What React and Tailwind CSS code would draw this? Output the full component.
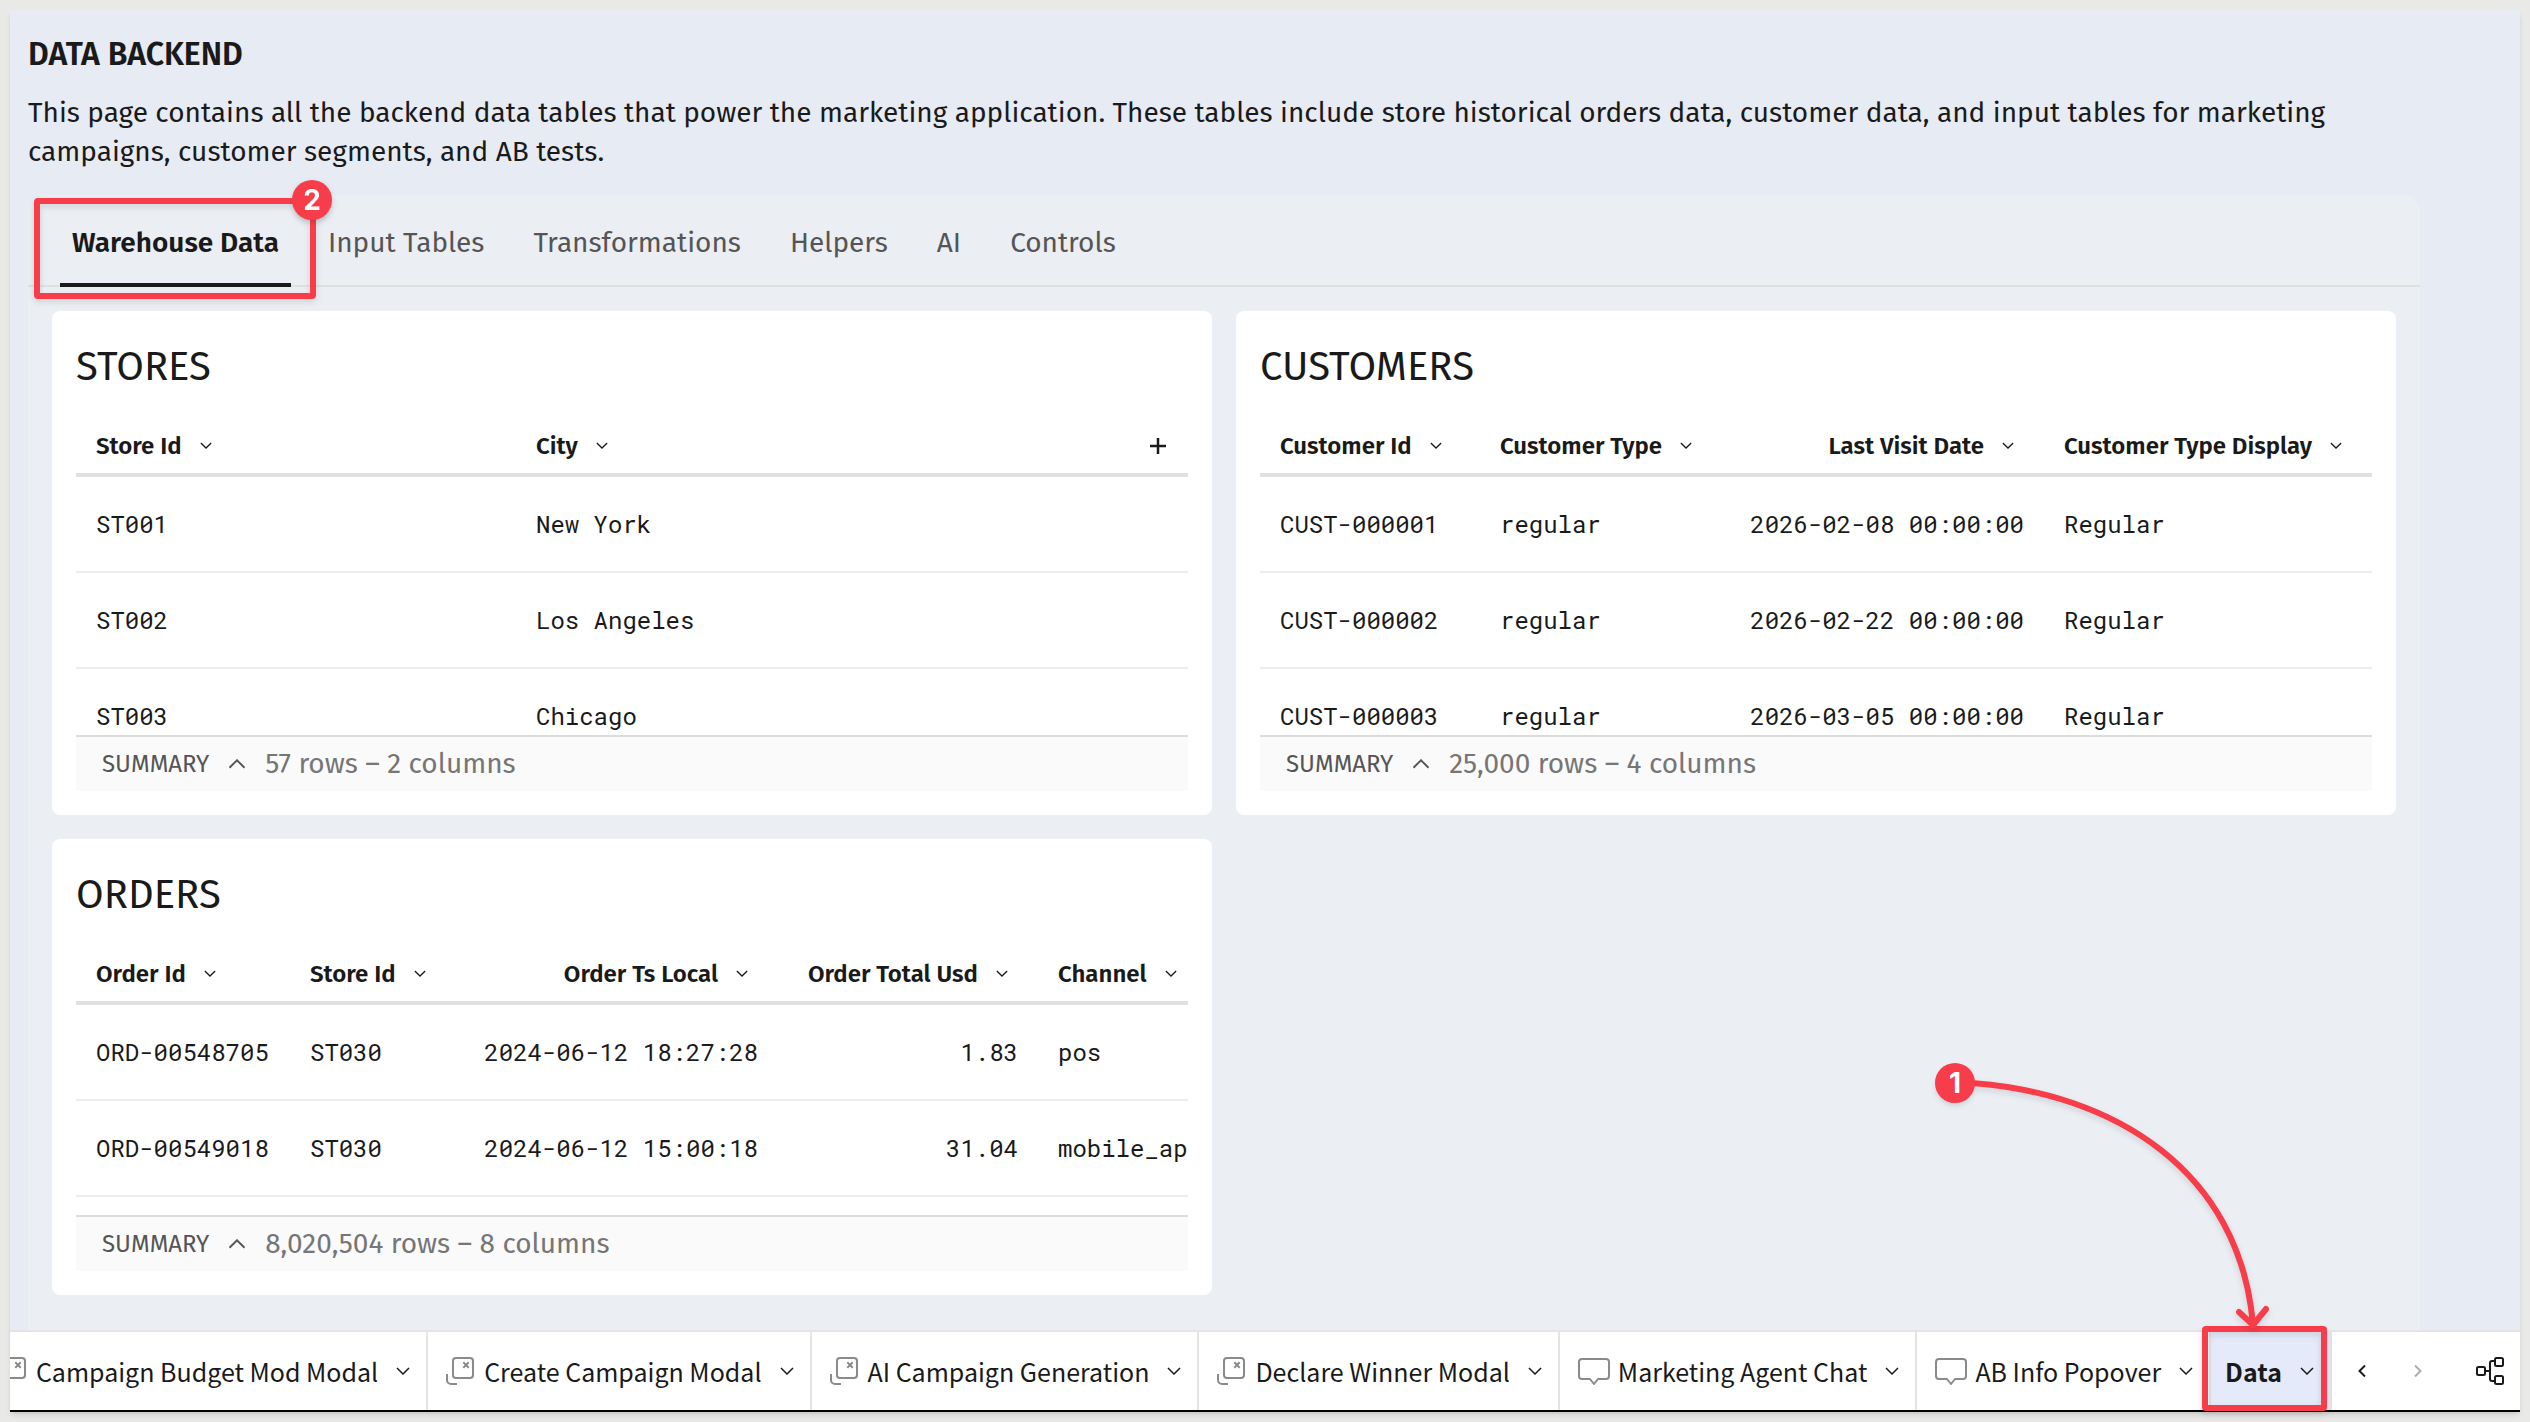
import React, { useState } from "react";

const sections = ["Warehouse Data", "Input Tables", "Transformations", "Helpers", "AI", "Controls"];

const pages = [
  { name: "Campaign Budget Mod Modal", type: "modal" },
  { name: "Create Campaign Modal", type: "modal" },
  { name: "AI Campaign Generation", type: "modal" },
  { name: "Declare Winner Modal", type: "modal" },
  { name: "Marketing Agent Chat", type: "popover" },
  { name: "AB Info Popover", type: "popover" },
  { name: "Data", type: "page" },
];

const stores = {
  title: "STORES",
  summary: "57 rows – 2 columns",
  height: "h-[317px]",
  canAdd: true,
  columns: [
    { name: "Store Id", width: "w-[440px]" },
    { name: "City", width: "" },
  ],
  rows: [
    ["ST001", "New York"],
    ["ST002", "Los Angeles"],
    ["ST003", "Chicago"],
  ],
};

const customers = {
  title: "CUSTOMERS",
  summary: "25,000 rows – 4 columns",
  height: "h-[317px]",
  columns: [
    { name: "Customer Id", width: "w-[220px]" },
    { name: "Customer Type", width: "w-[250px]" },
    { name: "Last Visit Date", width: "w-[314px]", right: true },
    { name: "Customer Type Display", width: "" },
  ],
  rows: [
    ["CUST-000001", "regular", "2026-02-08 00:00:00", "Regular"],
    ["CUST-000002", "regular", "2026-02-22 00:00:00", "Regular"],
    ["CUST-000003", "regular", "2026-03-05 00:00:00", "Regular"],
  ],
};

const orders = {
  title: "ORDERS",
  summary: "8,020,504 rows – 8 columns",
  height: "h-[269px]",
  columns: [
    { name: "Order Id", width: "w-[214px]" },
    { name: "Store Id", width: "w-[174px]" },
    { name: "Order Ts Local", width: "w-[314px]", right: true },
    { name: "Order Total Usd", width: "w-[260px]", right: true },
    { name: "Channel", width: "" },
  ],
  rows: [
    ["ORD-00548705", "ST030", "2024-06-12 18:27:28", "1.83", "pos"],
    ["ORD-00549018", "ST030", "2024-06-12 15:00:18", "31.04", "mobile_app"],
  ],
};

function ChevronDown({ className }) {
  return (
    <svg className={className} viewBox="0 0 14 8" fill="none" stroke="currentColor" strokeWidth="1.5" aria-hidden="true">
      <path d="M1 1l6 6 6-6" />
    </svg>
  );
}

function ModalIcon() {
  return (
    <svg className="h-7 w-7 shrink-0 text-[#8a8a8a]" viewBox="0 0 28 28" fill="none" stroke="currentColor" strokeWidth="2" aria-hidden="true">
      <rect x="7" y="1" width="20" height="20" rx="3" />
      <path d="M1 17v6a4 4 0 0 0 4 4h6" />
      <path d="M17.3 5.3l5.4 5.4M22.7 5.3l-5.4 5.4" />
    </svg>
  );
}

function PopoverIcon() {
  return (
    <svg className="h-7 w-8 shrink-0 text-[#8a8a8a]" viewBox="0 0 32 28" fill="none" stroke="currentColor" strokeWidth="2" strokeLinejoin="round" aria-hidden="true">
      <path d="M4 2h24a3 3 0 0 1 3 3v14a3 3 0 0 1-3 3h-8l-4 5-4-5H4a3 3 0 0 1-3-3V5a3 3 0 0 1 3-3z" />
    </svg>
  );
}

function StepBadge({ children, className }) {
  return (
    <span className={`absolute flex h-10 w-10 items-center justify-center rounded-full bg-[#f83d4a] font-[Inter,sans-serif] text-[28px] font-bold leading-none text-white shadow-md ${className}`}>
      {children}
    </span>
  );
}

function DataCard({ table }) {
  return (
    <section className="min-w-0 rounded-lg bg-white px-6 pb-6 pt-7">
      <h2 className="mb-[23px] text-[40px] leading-[56px]">{table.title}</h2>
      <div className={`overflow-hidden ${table.height}`}>
        <table className="w-full table-fixed border-separate border-spacing-0 text-2xl">
          <thead>
            <tr>
              {table.columns.map((col) => (
                <th key={col.name} className={`h-[59px] border-b-4 border-[#e0e0e0] p-0 pl-5 font-semibold ${col.width}`}>
                  <div className={`flex items-center gap-2 whitespace-nowrap ${col.right ? "justify-end pr-5" : ""}`}>
                    {col.name}
                    <button type="button" aria-label={`${col.name} menu`} className="flex h-8 w-8 items-center justify-center">
                      <ChevronDown className="h-[7px] w-3" />
                    </button>
                  </div>
                </th>
              ))}
              {table.canAdd && (
                <th className="h-[59px] w-[60px] border-b-4 border-[#e0e0e0] p-0">
                  <button type="button" aria-label="Add column" className="flex h-8 w-full items-center justify-center">
                    <svg className="h-4 w-4" viewBox="0 0 16 16" stroke="currentColor" strokeWidth="2.5" aria-hidden="true">
                      <path d="M8 0v16M0 8h16" />
                    </svg>
                  </button>
                </th>
              )}
            </tr>
          </thead>
          <tbody className="font-['Roboto_Mono','DejaVu_Sans_Mono',monospace]">
            {table.rows.map((row) => (
              <tr key={row[0]}>
                {row.map((cell, idx) => (
                  <td key={idx} className={`h-24 whitespace-nowrap border-b-2 border-[#ececec] p-0 pl-5 ${table.columns[idx].right ? "pr-5 text-right" : ""}`}>
                    {cell}
                  </td>
                ))}
                {table.canAdd && <td className="h-24 border-b-2 border-[#ececec] p-0" />}
              </tr>
            ))}
          </tbody>
        </table>
      </div>
      <div className="flex h-14 items-center gap-[19px] border-t-2 border-[#dcdcdc] bg-[#fafafa] pl-[26px]">
        <button type="button" className="flex items-center gap-[19px] text-2xl text-[#555]">
          SUMMARY
          <ChevronDown className="h-[10px] w-[18px] rotate-180" />
        </button>
        <span className="text-[28px] leading-9 text-[#767676]">{table.summary}</span>
      </div>
    </section>
  );
}

export default function App() {
  const [section, setSection] = useState("Warehouse Data");
  const [page, setPage] = useState("Data");

  return (
    <div className="flex min-h-screen flex-col bg-[#e9e9e8] p-[10px] font-['Fira_Sans','Noto_Sans',sans-serif] text-[#1a1a1a]">
      <div className="flex flex-1 flex-col bg-[#e7ebf3] shadow-md">
        <main className="flex flex-1 flex-col pl-[18px] pr-[100px] pt-5">
          <h1 className="mb-[15px] text-[32px] font-semibold leading-[48px]">DATA BACKEND</h1>
          <p className="mb-6 text-[28px] leading-[39px]">
            This page contains all the backend data tables that power the marketing application. These tables include store historical orders data, customer data, and input tables for marketing campaigns, customer segments, and AB tests.
          </p>

          <div className="flex-1 rounded-t-2xl bg-[#ebeef3]">
            <nav className="flex h-[92px] gap-[25px] border-b-2 border-[#e0e0e0] px-8">
              {sections.map((name) => (
                <button
                  key={name}
                  type="button"
                  onClick={() => setSection(name)}
                  className={`relative -mb-[2px] border-b-4 px-3 pt-2 text-[28px] leading-9 ${section === name ? "border-[#1a1a1a] font-semibold" : "border-transparent text-[#555]"}`}
                >
                  {name}
                  {name === "Warehouse Data" && (
                    <span className="absolute -bottom-4 -left-[26px] -right-[25px] top-[3px] rounded border-6 border-[#f83d4a] drop-shadow-md">
                      <StepBadge className="-right-[22px] -top-6">2</StepBadge>
                    </span>
                  )}
                </button>
              ))}
            </nav>
            <div className="grid grid-cols-2 gap-6 p-6">
              <DataCard table={stores} />
              <DataCard table={customers} />
              <DataCard table={orders} />
            </div>
          </div>
        </main>

        <footer className="relative flex h-[82px] border-b-2 border-t-2 border-b-black border-t-[#e4e4e4] bg-white font-['Noto_Sans_CJK_JP',sans-serif]">
          <div className="flex min-w-0 flex-1 justify-end overflow-hidden">
            {pages.map(({ name, type }) => (
              <div key={name} className={`flex shrink-0 items-center border-r-2 border-[#e4e4e4] pr-4 ${type === "page" ? "pl-[14px]" : "pl-[18px]"} ${page === name ? "bg-[#e4eafa]" : ""}`}>
                <button
                  type="button"
                  onClick={() => setPage(name)}
                  className={`flex items-center whitespace-nowrap text-[25px] leading-9 ${type === "modal" ? "gap-[10px]" : "gap-2"} ${page === name ? "font-bold" : ""}`}
                >
                  {type === "modal" && <ModalIcon />}
                  {type === "popover" && <PopoverIcon />}
                  {name}
                </button>
                <button type="button" aria-label={`${name} options`} className="ml-[18px]">
                  <ChevronDown className="h-2 w-[14px]" />
                </button>
              </div>
            ))}
          </div>
          <div className="flex w-[188px] shrink-0 items-center pl-[2px]">
            <button type="button" aria-label="Previous pages" className="flex h-14 w-14 items-center justify-center">
              <svg className="h-3 w-2" viewBox="0 0 8 12" fill="none" stroke="currentColor" strokeWidth="2" aria-hidden="true">
                <path d="M7 0.5L1.5 6 7 11.5" />
              </svg>
            </button>
            <button type="button" aria-label="Next pages" className="flex h-14 w-14 items-center justify-center text-[#adadad]">
              <svg className="h-3 w-2" viewBox="0 0 8 12" fill="none" stroke="currentColor" strokeWidth="2" aria-hidden="true">
                <path d="M1 0.5L6.5 6 1 11.5" />
              </svg>
            </button>
            <button type="button" aria-label="Page map" className="ml-auto flex h-14 w-[60px] items-center justify-center">
              <svg className="h-7 w-7" viewBox="0 0 28 28" fill="none" stroke="currentColor" strokeWidth="2" aria-hidden="true">
                <rect x="1" y="10" width="8" height="8" rx="1.5" />
                <rect x="19" y="1" width="8" height="8" rx="1.5" />
                <rect x="19" y="19" width="8" height="8" rx="1.5" />
                <path d="M9 14h5M19 4h-3a2 2 0 0 0-2 2v16a2 2 0 0 0 2 2h3" />
              </svg>
            </button>
          </div>

          {/* walkthrough step 1, laid over the page tabs */}
          <div className="pointer-events-none absolute -top-[6px] right-[193px] h-[85px] w-[125px] rounded border-6 border-[#f83d4a] drop-shadow-md" />
          <div className="pointer-events-none absolute bottom-full right-[246px] h-[272px] w-[340px]">
            <svg className="h-full w-full drop-shadow-md" viewBox="0 0 340 272" fill="none" stroke="#f83d4a" strokeWidth="6" strokeLinecap="round" strokeLinejoin="round" aria-hidden="true">
              <path d="M38 23C179 33 306 110 319 265" />
              <path d="M305 252l14 13 13-16" />
            </svg>
            <StepBadge className="left-px top-[3px]">1</StepBadge>
          </div>
        </footer>
      </div>
    </div>
  );
}
